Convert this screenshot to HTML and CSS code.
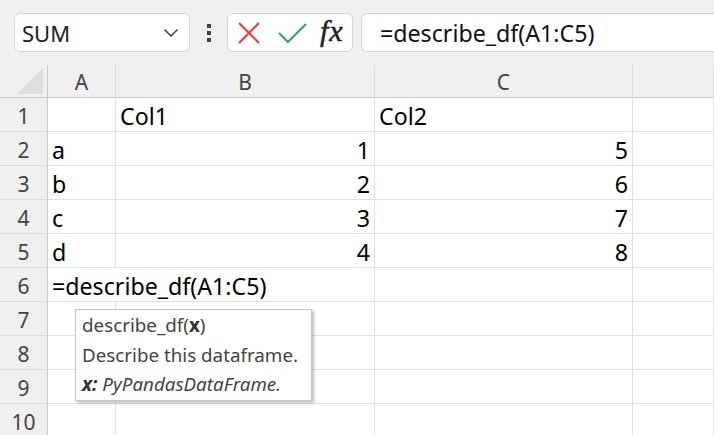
FILE: index.html
```html
<!DOCTYPE html>
<html lang="en">
<head>
    <meta charset="UTF-8">
    <title>describe_df</title>
    <link rel="stylesheet" href="styles.css">
</head>
<body>

    <!-- Formula bar -->
    <div class="toolbar">
        <div class="name-box">
            <span>SUM</span>
            <svg width="16" height="10" viewBox="0 0 16 10"><path d="M1.5 1.5 L8 8 L14.5 1.5" fill="none" stroke="#333" stroke-width="1.4"/></svg>
        </div>
        <div class="dots"><i></i><i></i><i></i></div>
        <div class="fx-box">
            <svg class="cancel" width="24" height="24" viewBox="0 0 24 24"><path d="M2 2 L22 22 M22 2 L2 22" stroke="#e8413c" stroke-width="2.2"/></svg>
            <svg class="enter" width="30" height="24" viewBox="0 0 30 24"><path d="M1 12 L10 21 L28 3" fill="none" stroke="#3aa655" stroke-width="2.2"/></svg>
            <span class="fx">fx</span>
        </div>
        <div class="formula">=describe_df(A1:C5)</div>
    </div>

    <!-- Sheet -->
    <div class="sheet">
        <div class="corner"><div class="tri"></div></div>
        <div class="col-head">A</div>
        <div class="col-head">B</div>
        <div class="col-head">C</div>
        <div class="col-head"></div>

        <div class="row-head">1</div>
        <div class="cell"></div>
        <div class="cell">Col1</div>
        <div class="cell">Col2</div>
        <div class="cell"></div>

        <div class="row-head">2</div>
        <div class="cell">a</div>
        <div class="cell num">1</div>
        <div class="cell num">5</div>
        <div class="cell"></div>

        <div class="row-head">3</div>
        <div class="cell">b</div>
        <div class="cell num">2</div>
        <div class="cell num">6</div>
        <div class="cell"></div>

        <div class="row-head">4</div>
        <div class="cell">c</div>
        <div class="cell num">3</div>
        <div class="cell num">7</div>
        <div class="cell"></div>

        <div class="row-head">5</div>
        <div class="cell">d</div>
        <div class="cell num">4</div>
        <div class="cell num">8</div>
        <div class="cell"></div>

        <div class="row-head">6</div>
        <div class="cell overflow">=describe_df(A1:C5)</div>
        <div class="cell"></div>
        <div class="cell"></div>
        <div class="cell"></div>

        <div class="row-head">7</div>
        <div class="cell"></div>
        <div class="cell"></div>
        <div class="cell"></div>
        <div class="cell"></div>

        <div class="row-head">8</div>
        <div class="cell"></div>
        <div class="cell"></div>
        <div class="cell"></div>
        <div class="cell"></div>

        <div class="row-head">9</div>
        <div class="cell"></div>
        <div class="cell"></div>
        <div class="cell"></div>
        <div class="cell"></div>

        <div class="row-head">10</div>
        <div class="cell"></div>
        <div class="cell"></div>
        <div class="cell"></div>
        <div class="cell"></div>

        <!-- Function tooltip -->
        <div class="tooltip">
            <div>describe_df(<b>x</b>)</div>
            <div>Describe this dataframe.</div>
            <div><b><i>x:</i></b> <i>PyPandasDataFrame.</i></div>
        </div>
    </div>

</body>
</html>
```

FILE: styles.css
```css
body {
    margin: 0;
    padding: 0;
    background-color: #f0f0f0;
    font-family: "Noto Sans", "Open Sans", sans-serif;
    overflow: hidden;
}
.toolbar {
    display: flex;
    align-items: center;
    height: 65px;
    padding-left: 14px;
}
.name-box {
    box-sizing: border-box;
    width: 176px;
    height: 39px;
    background-color: white;
    border: 1px solid #d6d6d6;
    border-radius: 6px;
    display: flex;
    align-items: center;
    justify-content: space-between;
    padding: 0 10px 0 7px;
    font-size: 22px;
    color: #222;
}
.dots {
    width: 37px;
    display: flex;
    flex-direction: column;
    align-items: center;
    gap: 3px;
}
.dots i {
    width: 4px;
    height: 4px;
    background-color: #444;
}
.fx-box {
    box-sizing: border-box;
    width: 126px;
    height: 39px;
    background-color: white;
    border: 1px solid #d6d6d6;
    border-radius: 6px;
    display: flex;
    align-items: center;
    padding-left: 9px;
}
.enter {
    margin-left: 17px;
}
.fx {
    font-family: "Liberation Serif", serif;
    font-style: italic;
    font-size: 30px;
    color: #222;
    margin-left: 12px;
    letter-spacing: 1px;
    margin-top: -4px;
    -webkit-text-stroke: 0.5px #222;
}
.formula {
    box-sizing: border-box;
    flex: 1;
    height: 39px;
    margin-left: 8px;
    background-color: white;
    border: 1px solid #d6d6d6;
    border-right: none;
    border-radius: 6px 0 0 6px;
    padding-left: 18px;
    display: flex;
    align-items: center;
    font-size: 23.2px;
    color: #111;
}
.sheet {
    position: relative;
    display: grid;
    grid-template-columns: 48px 68px 259px 258px 1fr;
    grid-template-rows: 33px repeat(10, 34px);
}
.corner {
    border-right: 1px solid #c8c8c8;
    border-bottom: 1px solid #c8c8c8;
    display: flex;
    align-items: flex-end;
    justify-content: flex-end;
    padding: 0 4px 3px 0;
}
.tri {
    width: 0;
    height: 0;
    border-left: 26px solid transparent;
    border-bottom: 26px solid #dedede;
}
.col-head {
    display: flex;
    align-items: center;
    justify-content: center;
    border-bottom: 1px solid #c8c8c8;
    border-right: 1px solid #dcdcdc;
    font-size: 21px;
    color: #444;
    padding-top: 2px;
}
.row-head {
    display: flex;
    align-items: center;
    justify-content: center;
    border-right: 1px solid #c8c8c8;
    border-bottom: 1px solid #dcdcdc;
    font-size: 21px;
    color: #444;
    padding-top: 3px;
}
.cell {
    background-color: white;
    border-right: 1px solid #e1e1e1;
    border-bottom: 1px solid #e1e1e1;
    display: flex;
    align-items: center;
    padding: 3px 4px 0 4px;
    font-size: 23.2px;
    color: #000;
    white-space: nowrap;
}
.cell.num {
    justify-content: flex-end;
}
.cell.overflow {
    border-right: none;
    z-index: 1;
}
.tooltip {
    position: absolute;
    left: 75px;
    top: 244px;
    width: 237px;
    box-sizing: border-box;
    background-color: white;
    border: 1px solid #c6c6c6;
    box-shadow: 2px 2px 3px rgba(0, 0, 0, 0.25);
    padding: 1px 6px 0 6px;
    font-size: 18.8px;
    line-height: 29.7px;
    color: #444;
    white-space: nowrap;
    z-index: 2;
}
.tooltip b {
    color: #333;
}
```
